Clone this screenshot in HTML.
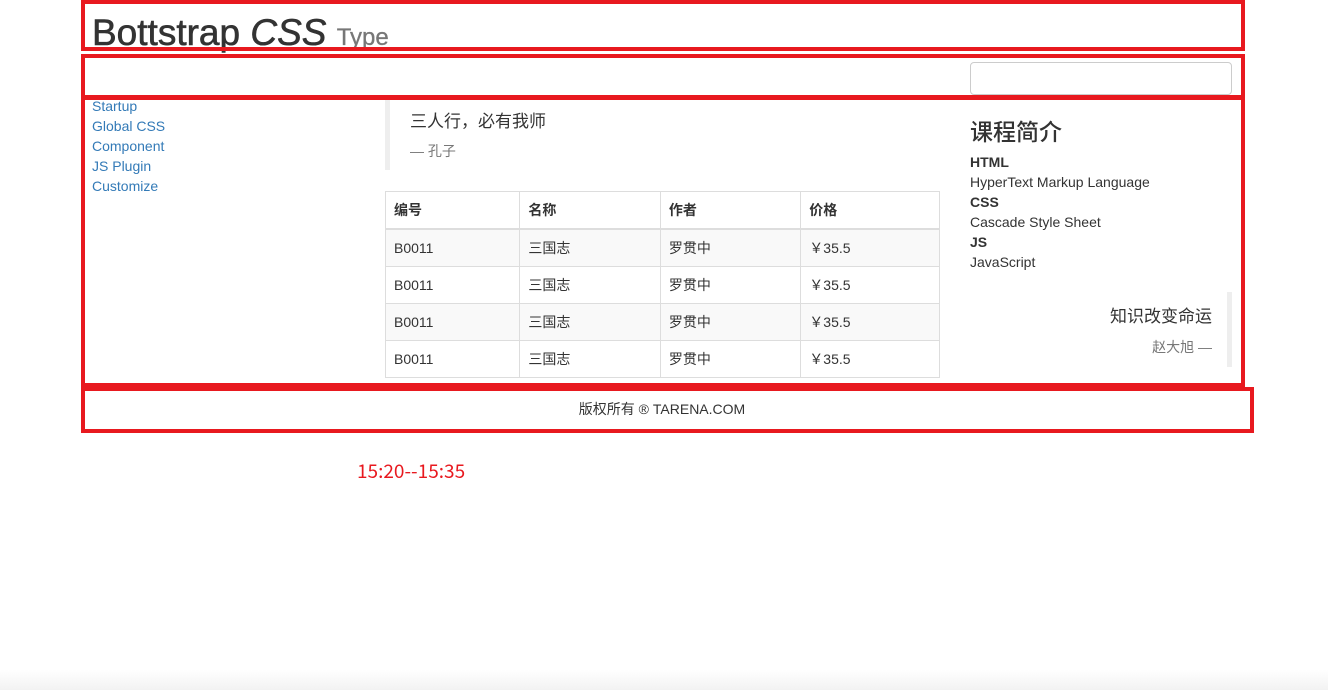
<!DOCTYPE html>
<html><head><meta charset="utf-8"><style>
body{margin:0;width:1328px;height:690px;background:#fff;font-family:"Liberation Sans","Noto Sans CJK SC",sans-serif;color:#333;font-size:14px;position:relative;overflow:hidden}
.a{position:absolute}
.box{position:absolute;border:4px solid #e8191f;box-sizing:border-box}
a{color:#337ab7;text-decoration:none}
table{border-collapse:collapse;position:absolute;left:385px;top:191px;width:555px}
td,th{border:1px solid #ddd;padding:8px 8px;line-height:20px;height:20px;text-align:left;font-size:14px;vertical-align:middle}
td span,th span{display:inline-block;height:20px;line-height:20px;vertical-align:top}
th{border-bottom:2px solid #ddd}
tr:nth-child(even) td{background:#f9f9f9}
</style></head><body>
<div class="a" style="left:92px;top:11px;font-size:37px;line-height:44px;color:#333;-webkit-text-stroke:0.6px #333">Bottstrap <i>CSS</i> <span style="font-size:24px;color:#777;-webkit-text-stroke:0.3px #777">Type</span></div>
<div class="a" style="left:970px;top:62px;width:262px;height:33px;border:1px solid #ccc;border-radius:4px;box-sizing:border-box"></div>
<div class="a" style="left:92px;top:96px;line-height:20px;font-size:14px">
<a>Startup</a><br><a>Global CSS</a><br><a>Component</a><br><a>JS Plugin</a><br><a>Customize</a></div>
<div class="a" style="left:385px;top:100px;width:5px;height:70px;background:#eee"></div>
<div class="a" style="left:410px;top:107px;font-size:17px">三人行，必有我师</div>
<div class="a" style="left:410px;top:141px;font-size:14px;color:#777">— 孔子</div>
<table>
<tr><th><span>编号</span></th><th><span>名称</span></th><th><span>作者</span></th><th><span>价格</span></th></tr>
<tr><td><span>B0011</span></td><td><span>三国志</span></td><td><span>罗贯中</span></td><td><span>￥35.5</span></td></tr>
<tr><td><span>B0011</span></td><td><span>三国志</span></td><td><span>罗贯中</span></td><td><span>￥35.5</span></td></tr>
<tr><td><span>B0011</span></td><td><span>三国志</span></td><td><span>罗贯中</span></td><td><span>￥35.5</span></td></tr>
<tr><td><span>B0011</span></td><td><span>三国志</span></td><td><span>罗贯中</span></td><td><span>￥35.5</span></td></tr>
</table>
<div class="a" style="left:970px;top:113px;font-size:23px;font-weight:500">课程简介</div>
<div class="a" style="left:970px;top:152px;line-height:20px;font-size:14px">
<b>HTML</b><br>HyperText Markup Language<br><b>CSS</b><br>Cascade Style Sheet<br><b>JS</b><br>JavaScript</div>
<div class="a" style="left:1227px;top:292px;width:5px;height:75px;background:#eee"></div>
<div class="a" style="right:116px;top:302px;font-size:17px">知识改变命运</div>
<div class="a" style="right:116px;top:337px;font-size:14px;color:#777">赵大旭 —</div>
<div class="a" style="left:0;width:1328px;top:399px;text-align:center;font-size:14px"><span style="margin-left:-4px">版权所有 ® TARENA.COM</span></div>
<div class="a" style="left:357px;top:457px;font-size:19px;color:#e8191f;font-family:'Noto Sans CJK SC','Liberation Sans',sans-serif">15:20--15:35</div>
<div class="box" style="left:81px;top:0;width:1164px;height:51px"></div>
<div class="box" style="left:81px;top:54px;width:1164px;height:45px"></div>
<div class="box" style="left:81px;top:96px;width:1164px;height:291px"></div>
<div class="box" style="left:81px;top:387px;width:1173px;height:46px"></div>
<div class="a" style="left:0;top:670px;width:1328px;height:20px;background:linear-gradient(#fff,#f2f2f2)"></div>
</body></html>
